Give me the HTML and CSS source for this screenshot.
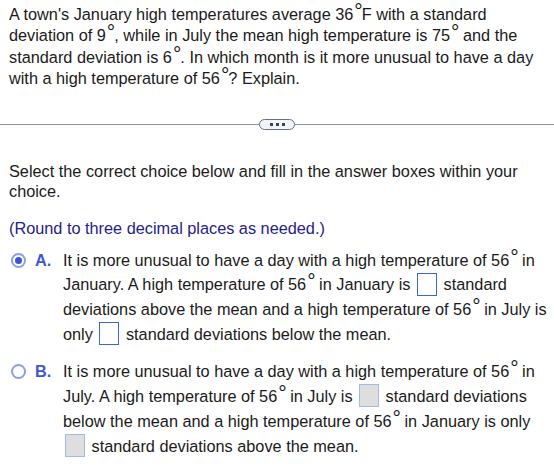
FILE: index.html
```html
<!DOCTYPE html>
<html>
<head>
<meta charset="utf-8">
<link rel="stylesheet" href="styles.css">
</head>
<body>
<div class="page">
  <p class="question">A town's January high temperatures average 36<sup class="deg">°</sup>F with a standard deviation of 9<sup class="deg">°</sup>, while in July the mean high temperature is 75<sup class="deg">°</sup> and the standard deviation is 6<sup class="deg">°</sup>. In which month is it more unusual to have a day with a high temperature of 56<sup class="deg">°</sup>? Explain.</p>

  <div class="divider">
    <span class="rule"></span>
    <span class="pill"><i></i><i></i><i></i></span>
    <span class="rule"></span>
  </div>

  <p class="instr">Select the correct choice below and fill in the answer boxes within your choice.</p>
  <p class="round">(Round to three decimal places as needed.)</p>

  <div class="choice">
    <span class="radio checked"></span>
    <span class="letter">A.</span>
    <p class="ctext">It is more unusual to have a day with a high temperature of 56<sup class="deg">°</sup> in January. A high temperature of 56<sup class="deg">°</sup> in January is <span class="box"></span> standard deviations above the mean and a high temperature of 56<sup class="deg">°</sup> in July is only <span class="box"></span> standard deviations below the mean.</p>
  </div>

  <div class="choice choice-b">
    <span class="radio"></span>
    <span class="letter">B.</span>
    <p class="ctext">It is more unusual to have a day with a high temperature of 56<sup class="deg">°</sup> in July. A high temperature of 56<sup class="deg">°</sup> in July is <span class="box off"></span> standard deviations below the mean and a high temperature of 56<sup class="deg">°</sup> in January is only <span class="box off"></span> standard deviations above the mean.</p>
  </div>
</div>
</body>
</html>
```

FILE: styles.css
```css
html, body {
  margin: 0;
  padding: 0;
  background: #ffffff;
}
body {
  font-family: "Liberation Sans", Arial, sans-serif;
  font-size: 16.3px;
  color: #1a1a1a;
}
.page {
  padding: 4px 0 0 0;
}
p { margin: 0; }
.question {
  margin: 0 17px 0 9px;
  line-height: 21.4px;
}
.deg {
  font-size: 21px;
  line-height: 0;
  vertical-align: 2px;
  margin-left: 1px;
  margin-right: -1px;
}
.divider {
  display: flex;
  align-items: center;
  margin-top: 29px;
  height: 12px;
}
.rule {
  flex: 1;
  height: 1px;
  background: #8c939c;
}
.pill {
  width: 34px;
  height: 9px;
  border: 1.5px solid #66717f;
  border-radius: 6px;
  background: #f1f4f8;
  display: flex;
  align-items: center;
  justify-content: center;
  gap: 3px;
}
.pill i {
  width: 3px;
  height: 3px;
  background: #3a4350;
  display: block;
}
.instr {
  margin: 30px 17px 0 9px;
  line-height: 20px;
}
.round {
  margin: 17px 17px 0 9px;
  line-height: 20px;
  color: #24228a;
}
.choice {
  display: flex;
  align-items: flex-start;
  margin-top: 10px;
  padding-left: 11px;
}
.choice-b {
  margin-top: 13px;
}
.radio {
  flex: none;
  width: 11px;
  height: 11px;
  border: 2px solid #8b9fe4;
  border-radius: 50%;
  margin-top: 5px;
  position: relative;
}
.radio.checked::after {
  content: "";
  position: absolute;
  left: 2px;
  top: 2px;
  width: 7px;
  height: 7px;
  border-radius: 50%;
  background: #3d55d0;
}
.letter {
  flex: none;
  width: 28px;
  margin-left: 9px;
  font-weight: bold;
  color: #3f58cf;
  line-height: 24.7px;
}
.ctext {
  width: 489px;
  line-height: 24.7px;
}
.box {
  display: inline-block;
  width: 18px;
  height: 21px;
  margin: -4px 2px 0 2px;
  border: 1px solid #3b68cc;
  vertical-align: middle;
  box-sizing: content-box;
}
.box.off {
  background: #dedede;
  border-color: #a3b9ea;
}
```
